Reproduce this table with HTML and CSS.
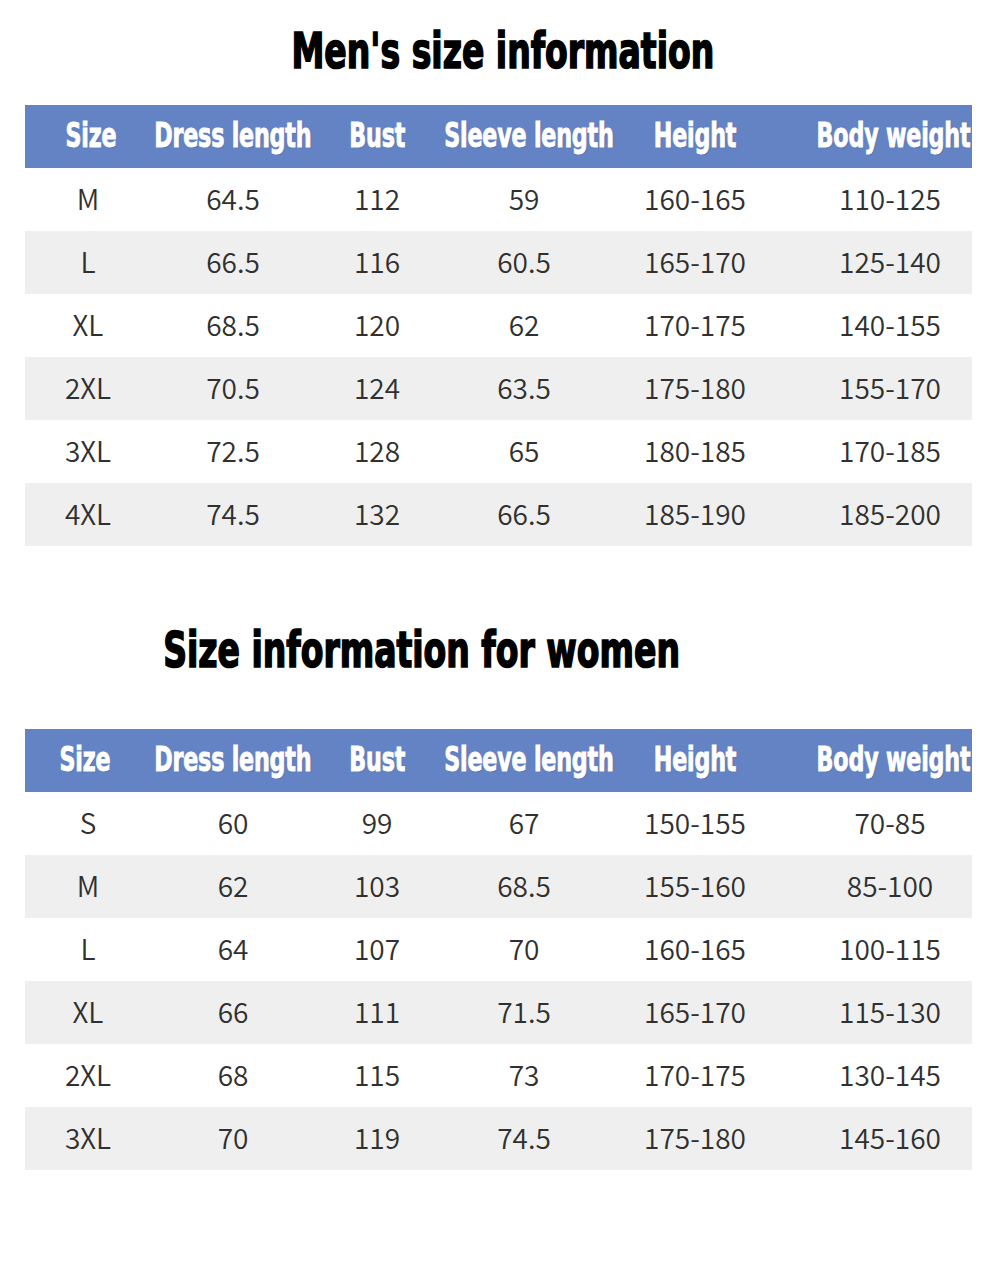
FILE: index.html
```html
<!DOCTYPE html>
<html lang="en">
<head>
<meta charset="utf-8">
<title>Size information</title>
<link rel="stylesheet" href="styles.css">
</head>
<body>
<main class="page">
  <section class="block block-men">
    <h1 class="title title-men"><span class="squeeze">Men's size information</span></h1>
    <div class="table">
      <div class="row head">
        <div class="cell first-m"><span class="squeeze">Size</span></div>
        <div class="cell"><span class="squeeze">Dress length</span></div>
        <div class="cell"><span class="squeeze">Bust</span></div>
        <div class="cell"><span class="squeeze">Sleeve length</span></div>
        <div class="cell"><span class="squeeze">Height</span></div>
        <div class="cell last"><span class="squeeze">Body weight</span></div>
      </div>
      <div class="row"><div class="cell">M</div><div class="cell">64.5</div><div class="cell">112</div><div class="cell">59</div><div class="cell">160-165</div><div class="cell last">110-125</div></div>
      <div class="row alt"><div class="cell">L</div><div class="cell">66.5</div><div class="cell">116</div><div class="cell">60.5</div><div class="cell">165-170</div><div class="cell last">125-140</div></div>
      <div class="row"><div class="cell">XL</div><div class="cell">68.5</div><div class="cell">120</div><div class="cell">62</div><div class="cell">170-175</div><div class="cell last">140-155</div></div>
      <div class="row alt"><div class="cell">2XL</div><div class="cell">70.5</div><div class="cell">124</div><div class="cell">63.5</div><div class="cell">175-180</div><div class="cell last">155-170</div></div>
      <div class="row"><div class="cell">3XL</div><div class="cell">72.5</div><div class="cell">128</div><div class="cell">65</div><div class="cell">180-185</div><div class="cell last">170-185</div></div>
      <div class="row alt"><div class="cell">4XL</div><div class="cell">74.5</div><div class="cell">132</div><div class="cell">66.5</div><div class="cell">185-190</div><div class="cell last">185-200</div></div>
    </div>
  </section>

  <section class="block block-women">
    <h1 class="title title-women"><span class="squeeze">Size information for women</span></h1>
    <div class="table">
      <div class="row head">
        <div class="cell first-w"><span class="squeeze">Size</span></div>
        <div class="cell"><span class="squeeze">Dress length</span></div>
        <div class="cell"><span class="squeeze">Bust</span></div>
        <div class="cell"><span class="squeeze">Sleeve length</span></div>
        <div class="cell"><span class="squeeze">Height</span></div>
        <div class="cell last"><span class="squeeze">Body weight</span></div>
      </div>
      <div class="row"><div class="cell">S</div><div class="cell">60</div><div class="cell">99</div><div class="cell">67</div><div class="cell">150-155</div><div class="cell last">70-85</div></div>
      <div class="row alt"><div class="cell">M</div><div class="cell">62</div><div class="cell">103</div><div class="cell">68.5</div><div class="cell">155-160</div><div class="cell last">85-100</div></div>
      <div class="row"><div class="cell">L</div><div class="cell">64</div><div class="cell">107</div><div class="cell">70</div><div class="cell">160-165</div><div class="cell last">100-115</div></div>
      <div class="row alt"><div class="cell">XL</div><div class="cell">66</div><div class="cell">111</div><div class="cell">71.5</div><div class="cell">165-170</div><div class="cell last">115-130</div></div>
      <div class="row"><div class="cell">2XL</div><div class="cell">68</div><div class="cell">115</div><div class="cell">73</div><div class="cell">170-175</div><div class="cell last">130-145</div></div>
      <div class="row alt"><div class="cell">3XL</div><div class="cell">70</div><div class="cell">119</div><div class="cell">74.5</div><div class="cell">175-180</div><div class="cell last">145-160</div></div>
    </div>
  </section>
</main>
</body>
</html>
```

FILE: styles.css
```css
html, body {
  margin: 0;
  padding: 0;
  background: #ffffff;
}

.page {
  width: 1000px;
  padding: 22px 0 0 25px;
  box-sizing: border-box;
}

.block-women {
  margin-top: 75px;
}

.title {
  margin: 0;
  font-family: "DejaVu Sans Condensed", "DejaVu Sans", sans-serif;
  font-stretch: condensed;
  font-weight: 700;
  font-size: 49px;
  line-height: 60px;
  height: 60px;
  color: #000;
  -webkit-text-stroke: 1.6px #000;
  white-space: nowrap;
  display: flex;
  justify-content: center;
}

.title-men {
  width: 956px;
  margin-bottom: 23px;
}

.title-women {
  width: 794px;
  margin-bottom: 48px;
}

.squeeze {
  display: inline-block;
  transform: scaleX(0.75);
  transform-origin: center;
  white-space: nowrap;
}

.table {
  width: 947px;
  display: flex;
  flex-direction: column;
}

.row {
  display: grid;
  grid-template-columns: 126px 164px 124px 180px 152px 201px;
  height: 63px;
  align-items: center;
  font-family: "Noto Sans CJK SC", "Noto Sans", sans-serif;
  font-weight: 350;
  font-size: 28px;
  color: #303030;
}

.row.alt {
  background: #efefef;
}

.row.head {
  background: #6383c4;
  color: #ffffff;
  font-family: "DejaVu Sans Condensed", "DejaVu Sans", sans-serif;
  font-stretch: condensed;
  font-weight: 700;
  font-size: 33px;
  -webkit-text-stroke: 0.9px #ffffff;
  text-shadow: 1px 1px 1px rgba(60, 60, 90, 0.35);
  letter-spacing: -0.3px;
}

.cell {
  display: flex;
  justify-content: center;
  white-space: nowrap;
  line-height: 1;
  padding-bottom: 3px;
}

.row:not(.head) .cell:nth-child(4) {
  padding-right: 10px;
}

.row.head .cell {
  padding-bottom: 2px;
}

.cell.last {
  padding-left: 37px;
}

.row.head .cell.last {
  padding-left: 43px;
}

.row.head .cell.first-m {
  padding-left: 6px;
}

.row.head .cell.first-w {
  padding-right: 6px;
}
```
